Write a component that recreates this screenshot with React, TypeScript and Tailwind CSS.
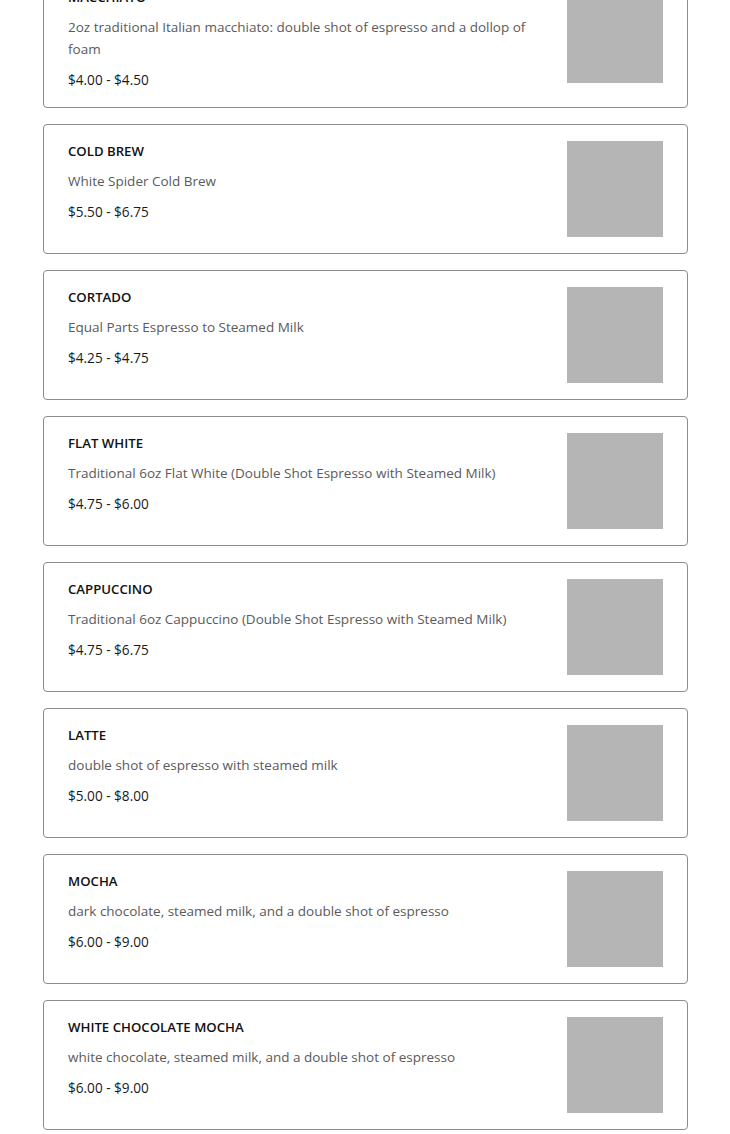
const items = [
  {
    name: 'MACCHIATO',
    desc: '2oz traditional Italian macchiato: double shot of espresso and a dollop of foam',
    price: '$4.00 - $4.50',
  },
  { name: 'COLD BREW', desc: 'White Spider Cold Brew', price: '$5.50 - $6.75' },
  { name: 'CORTADO', desc: 'Equal Parts Espresso to Steamed Milk', price: '$4.25 - $4.75' },
  {
    name: 'FLAT WHITE',
    desc: 'Traditional 6oz Flat White (Double Shot Espresso with Steamed Milk)',
    price: '$4.75 - $6.00',
  },
  {
    name: 'CAPPUCCINO',
    desc: 'Traditional 6oz Cappuccino (Double Shot Espresso with Steamed Milk)',
    price: '$4.75 - $6.75',
  },
  { name: 'LATTE', desc: 'double shot of espresso with steamed milk', price: '$5.00 - $8.00' },
  {
    name: 'MOCHA',
    desc: 'dark chocolate, steamed milk, and a double shot of espresso',
    price: '$6.00 - $9.00',
  },
  {
    name: 'WHITE CHOCOLATE MOCHA',
    desc: 'white chocolate, steamed milk, and a double shot of espresso',
    price: '$6.00 - $9.00',
  },
]

function MenuCard({ name, desc, price }: { name: string; desc: string; price: string }) {
  return (
    <div className="flex items-start justify-between gap-6 rounded-[4px] border border-[#8c8c8c] bg-white px-6 py-4">
      <div className="flex min-w-0 flex-1 flex-col">
        <h3 className="text-[13.2px] font-semibold leading-[20px] text-[#111]">{name}</h3>
        <p className="mt-[9px] text-[13.5px] leading-[22px] text-[#5a5a5a]">{desc}</p>
        <p className="mt-[9px] text-[13.6px] leading-[22px] text-[#1a1a1a]">{price}</p>
      </div>
      <div className="h-24 w-24 shrink-0 bg-[#b5b5b5]" />
    </div>
  )
}

export default function App() {
  return (
    <div className="min-h-screen bg-white font-['Open_Sans',sans-serif]">
      <div className="-mt-[30px] flex flex-col gap-4 pl-[43px] pr-[42px]">
        {items.map((item) => (
          <MenuCard key={item.name} {...item} />
        ))}
      </div>
    </div>
  )
}
